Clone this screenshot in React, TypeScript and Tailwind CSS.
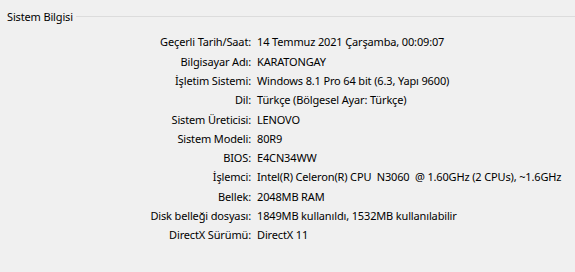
import React from "react";

const rows: [string, string][] = [
  ["Geçerli Tarih/Saat:", "14 Temmuz 2021 Çarşamba, 00:09:07"],
  ["Bilgisayar Adı:", "KARATONGAY"],
  ["İşletim Sistemi:", "Windows 8.1 Pro 64 bit (6.3, Yapı 9600)"],
  ["Dil:", "Türkçe (Bölgesel Ayar: Türkçe)"],
  ["Sistem Üreticisi:", "LENOVO"],
  ["Sistem Modeli:", "80R9"],
  ["BIOS:", "E4CN34WW"],
  ["İşlemci:", "Intel(R) Celeron(R) CPU  N3060  @ 1.60GHz (2 CPUs), ~1.6GHz"],
  ["Bellek:", "2048MB RAM"],
  ["Disk belleği dosyası:", "1849MB kullanıldı, 1532MB kullanılabilir"],
  ["DirectX Sürümü:", "DirectX 11"],
];

export default function App() {
  return (
    <div
      className="w-[575px] h-[272px] overflow-hidden bg-[#f0f0f0] text-[11px] tracking-[-0.15px] text-black"
      style={{ fontFamily: '"Noto Sans", "Open Sans", sans-serif' }}
    >
      <div className="flex items-center h-[19px] mt-[7px]">
        <span className="pl-[7px] pr-[3px] leading-[19px] whitespace-nowrap">Sistem Bilgisi</span>
        <div className="flex-1 h-px bg-[#dcdcdc]" />
      </div>
      <div className="mt-[7px] flex flex-col">
        {rows.map(([k, v]) => (
          <div key={k} className="flex h-[19.3px] items-center">
            <div className="w-[251px] shrink-0 text-right whitespace-nowrap">{k}</div>
            <div className="pl-[6px] whitespace-pre">{v}</div>
          </div>
        ))}
      </div>
      <div className="flex items-center mt-[30px] pl-[8px]">
        <div className="w-[13px] h-[13px] shrink-0 border border-[#333] bg-white flex items-center justify-center">
          <svg width="9" height="9" viewBox="0 0 9 9">
            <path d="M1 4.5 L3.5 7 L8 1.5" stroke="#000" strokeWidth="1.6" fill="none" />
          </svg>
        </div>
        <span className="ml-[6px] whitespace-nowrap">WHQL dijital imzalarını denetle</span>
      </div>
    </div>
  );
}
